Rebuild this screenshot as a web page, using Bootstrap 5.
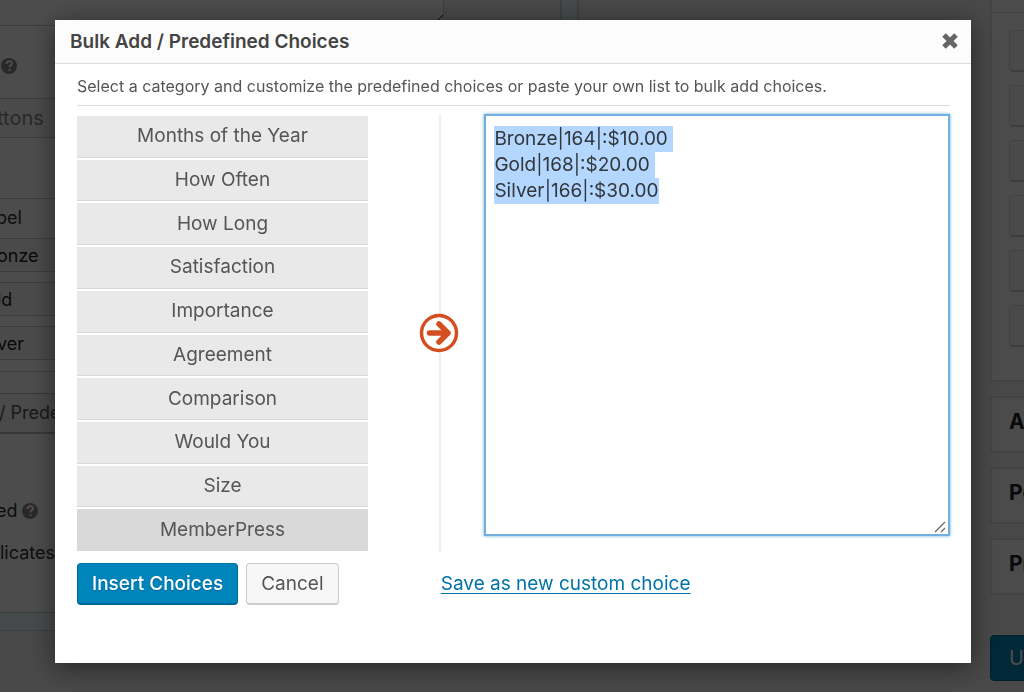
<!DOCTYPE html>
<html lang="en">
<head>
<meta charset="utf-8">
<meta name="viewport" content="width=device-width, initial-scale=1">
<title>Bulk Add / Predefined Choices</title>
<link rel="stylesheet" href="https://cdn.jsdelivr.net/npm/bootstrap@5.3.0/dist/css/bootstrap.min.css">
<style>
html, body { height: 100%; }
body { font-family: Inter, Roboto, sans-serif; font-size: 19px; line-height: 26px; color: #555; background: #f1f1f1; overflow: hidden; }
button, input, textarea { font-family: inherit; }

/* Form editor behind the dialog */
.editor-page { height: 100vh; overflow: hidden; color: #333; font-size: 18px; white-space: nowrap; }
.field-panel { width: 566px; margin-left: -4px; }
.panel-edge { height: 26px; border-right: 2px solid #c8d7e1; }
.panel-gap { width: 17px; background: #ecf5f8; border-right: 2px solid #c8d7e1; }
.notes-box { width: 448px; height: 26px; border: 1px solid #ccc; border-width: 0 1px 1px 0; background: #fdfdfd; }
.field-settings { background: #fdfdfd; padding-top: 27px; height: 587px; border-bottom: 1px solid #b8cfd8; }
.settings-end { height: 18px; background: #eff8f9; border-bottom: 1px solid #ccd6dc; }
.plain-input { width: 400px; height: 34px; border: 1px solid #ccc; background: #f8f8f8; padding: 0; color: #222; font-size: 18px; display: block; }
.type-input { height: 40px; color: #888; margin-top: 19px; font-size: 20px; }
.choice-head { margin-top: 60px; height: 40px; border-top: 1px solid #ccc; padding-top: 6px; }
.choice-rows { gap: 10px; padding-bottom: 11px; border-bottom: 1px solid #ccc; }
.bulk-btn { height: 41px; margin-top: 21px; width: 300px; padding: 0 0 0 2px; border: 1px solid #bbb; border-bottom-width: 2px; background: #f7f7f7; color: #555; text-align: left; }
.option-row { margin-top: 64px; gap: 4px; }
.tool-panel { border: 2px solid #e0e0e0; border-right: 0; background: #fafafa; }
.tool-side { width: 34px; overflow: hidden; }
.tool-top { height: 382px; border-top: 0; }
.tool-title { height: 13px; border-bottom: 1px solid #ddd; }
.tool-list { padding: 17px 0 0 17px; gap: 13px; }
.tool-btn { width: 90px; height: 42px; border: 1px solid #ddd; border-bottom: 2px solid #ccc; border-radius: 4px; background: #f7f7f7; }
.tool-panel h3 { font-size: 21px; line-height: 48px; font-weight: 700; margin: 0; padding: 0 0 0 17px; color: #222; }
.tool-closed { height: 57px; margin-top: 14px; }
.update-btn { margin-top: 40px; height: 46px; width: 120px; border: 1px solid #006799; border-radius: 4px; background: #0085ba; color: #fff; padding: 0 0 0 18px; font-size: 20px; text-align: left; }
.screen { background: rgba(0, 0, 0, .7); }

/* Dialog */
.dialog-wrap { padding: 20px 53px 29px 55px; }
.dialog-box { border: 0; border-radius: 0; box-shadow: 0 4px 24px rgba(0, 0, 0, .5); background: #fff; }
.dialog-head { height: 44px; padding: 0 12px 0 15px; background: #fcfcfc; border-bottom: 1px solid #ddd; border-radius: 0; }
.dialog-head h1 { font-size: 19px; line-height: 26px; font-weight: 600; color: #444; }
.dialog-main { padding: 0 21px 58px 22px; }
.intro { font-size: 16px; line-height: 24px; padding: 10px 0 7px; border-bottom: 1px solid #ddd; margin-bottom: 8px; }
.chooser { display: grid; grid-template-columns: 5fr 2fr 8fr; }
.categories { min-height: 435px; gap: 2px; margin: 2px 0 0; }
.cat-btn { display: block; width: 100%; height: 100%; padding: 0; border: 0; border-bottom: 1px solid #d8d8d8; background: #e9e9e9; color: #555; }
.cat-btn.active { background: #d9d9d9; border-color: #d9d9d9; }
.divider { background: linear-gradient(#eee, #eee) 62% 0 / 2px 100% no-repeat; padding-left: 26px; }
.choices-box { height: 422px; border: 2px solid #73aee0; border-radius: 0; padding: 10px 8px; color: #32373c; font-size: 19px; line-height: 26px; outline: 0; box-shadow: 0 0 3px rgba(30, 140, 190, .7); resize: both; width: 100%; }
.choices-box::selection { background: #b3d7ff; color: #32373c; }
.choices-box::-webkit-resizer { background: url("data:image/svg+xml,%3Csvg xmlns='http://www.w3.org/2000/svg' width='15' height='15'%3E%3Cpath d='M2 13L12 3M8 13L12 9' stroke='%23666' stroke-width='1.200'/%3E%3C/svg%3E") no-repeat; }
.actions { margin-top: 12px; }
.act-btn { height: 42px; padding: 0 14px; border: 1px solid #ccc; border-bottom: 2px solid #ccc; border-radius: 4px; background: #f7f7f7; color: #555; line-height: 38px; }
.act-main { background: #0085ba; border-color: #0073aa #006799 #006799; color: #fff; font-weight: 500; text-shadow: 0 1px 2px #006799; }
.save-link { color: #0073aa; text-underline-offset: 3px; }
</style>
</head>
<body>
<div class="editor-page d-flex" aria-hidden="true">
  <div class="field-panel flex-shrink-0">
    <div class="panel-edge"><div class="notes-box d-flex justify-content-end align-items-end"><svg width="11" height="11" viewBox="0 0 11 11" stroke="#222" fill="none"><path d="M1 11 11 1M6 11l5-5"/></svg></div></div>
    <div class="field-settings">
      <div class="d-flex ps-1"><svg width="17" height="26" viewBox="-1 0 17 26"><circle cx="8" cy="13" r="8" fill="#888"/><path d="M5.500 11c0-4 5.500-3.500 5.500-.5 0 2-2.500 1.800-2.500 4M8.500 16v2" stroke="#fff" stroke-width="2" fill="none"/></svg></div>
      <input class="plain-input type-input" value="ttons" tabindex="-1" aria-label="Field type">
      <div class="choice-head">bel</div>
      <div class="choice-rows d-flex flex-column">
        <input class="plain-input" value="onze" tabindex="-1" aria-label="First choice">
        <input class="plain-input" value="ld" tabindex="-1" aria-label="Second choice">
        <input class="plain-input" value="ver" tabindex="-1" aria-label="Third choice">
      </div>
      <button type="button" class="bulk-btn d-block" tabindex="-1">/ Predefined Choices</button>
      <div class="option-row d-flex align-items-center">ed <svg class="flex-shrink-0" width="17" height="26" viewBox="0 0 17 26"><circle cx="8" cy="13" r="8" fill="#888"/><path d="M5.500 11c0-4 5.500-3.500 5.500-.5 0 2-2.500 1.800-2.500 4M8.500 16v2" stroke="#fff" stroke-width="2" fill="none"/></svg></div>
      <div class="mt-3 ps-1">licates</div>
    </div>
    <div class="settings-end"></div>
  </div>
  <div class="panel-gap flex-shrink-0 mb-auto">&nbsp;</div>
  <div class="tool-side ms-auto flex-shrink-0">
    <div class="tool-panel tool-top">
      <div class="tool-title"></div>
      <div class="tool-list d-flex flex-column">
        <div class="tool-btn"></div><div class="tool-btn"></div><div class="tool-btn"></div>
        <div class="tool-btn"></div><div class="tool-btn"></div><div class="tool-btn"></div>
      </div>
    </div>
    <div class="tool-panel tool-closed"><h3>Advanced Fields</h3></div>
    <div class="tool-panel tool-closed"><h3>Post Fields</h3></div>
    <div class="tool-panel tool-closed"><h3>Pricing Fields</h3></div>
    <button type="button" class="update-btn" tabindex="-1">Update</button>
  </div>
</div>

<div class="modal d-block screen" role="dialog" aria-modal="true" aria-labelledby="dialog-title">
  <div class="dialog-wrap">
    <div class="modal-content dialog-box">
      <div class="modal-header dialog-head">
        <h1 class="m-0" id="dialog-title">Bulk Add / Predefined Choices</h1>
        <button type="button" class="btn p-0 border-0 d-flex" aria-label="Close"><svg width="18" height="18" viewBox="0 0 18 18"><path d="M3 2l12 12M15 2 3 14" stroke="#666" stroke-width="5"/></svg></button>
      </div>
      <div class="dialog-main">
        <p class="intro mt-0">Select a category and customize the predefined choices or paste your own list to bulk add choices.</p>
        <div class="chooser">
          <ul class="categories list-unstyled d-flex flex-column">
            <li class="flex-fill"><button type="button" class="cat-btn">Months of the Year</button></li>
            <li class="flex-fill"><button type="button" class="cat-btn">How Often</button></li>
            <li class="flex-fill"><button type="button" class="cat-btn">How Long</button></li>
            <li class="flex-fill"><button type="button" class="cat-btn">Satisfaction</button></li>
            <li class="flex-fill"><button type="button" class="cat-btn">Importance</button></li>
            <li class="flex-fill"><button type="button" class="cat-btn">Agreement</button></li>
            <li class="flex-fill"><button type="button" class="cat-btn">Comparison</button></li>
            <li class="flex-fill"><button type="button" class="cat-btn">Would You</button></li>
            <li class="flex-fill"><button type="button" class="cat-btn">Size</button></li>
            <li class="flex-fill"><button type="button" class="cat-btn active">MemberPress</button></li>
          </ul>
          <div class="divider d-flex align-items-center justify-content-center">
            <svg width="40" height="40" viewBox="0 0 40 40"><circle cx="20" cy="20" r="17.500" fill="#fff" stroke="#d54e21" stroke-width="3.500"/><path d="M10.500 20h17M20 11l9 9-9 9" fill="none" stroke="#d54e21" stroke-width="5.500" stroke-linecap="round" stroke-linejoin="round"/></svg>
          </div>
          <div><textarea id="choices" class="choices-box d-block" aria-label="Choices" spellcheck="false" autofocus>Bronze|164|:$10.00
Gold|168|:$20.00
Silver|166|:$30.00</textarea></div>
        </div>
        <div class="actions d-flex align-items-center">
          <div class="col-5 d-flex gap-2">
            <button type="button" class="act-btn act-main">Insert Choices</button>
            <button type="button" class="act-btn">Cancel</button>
          </div>
          <a href="#" class="save-link">Save as new custom choice</a>
        </div>
      </div>
    </div>
  </div>
</div>
<script src="https://cdn.jsdelivr.net/npm/bootstrap@5.3.0/dist/js/bootstrap.bundle.min.js"></script>
<script>
const box = document.getElementById('choices');
box.focus();
box.select();
</script>
</body>
</html>
